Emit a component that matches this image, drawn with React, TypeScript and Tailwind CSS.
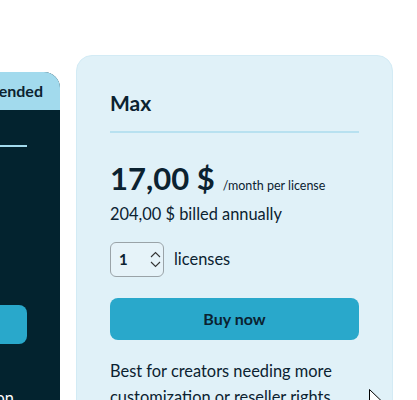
import React from "react";

export default function App() {
  return (
    <div className="relative w-[417px] h-[400px] overflow-hidden bg-white" style={{ fontFamily: "Lato, 'Noto Sans', sans-serif" }}>
      <div className="flex items-start gap-4 pt-[55px] ml-[-257px]">
        {/* Recommended card (mostly off-screen) */}
        <div className="w-[317px] shrink-0 mt-[17px] rounded-t-2xl overflow-hidden bg-[#03232f] h-[400px]">
          <div className="h-[38px] bg-[#a2daed] flex items-center justify-end pr-[17px] text-[16px] font-bold text-[#0c2330]">
            Recommended
          </div>
          <div className="px-[33px]">
            <div className="pt-[35px] h-[37px]">
              <div className="h-[2px] bg-[#a2daed]" />
            </div>
            <div className="h-[158px]" />
            <div className="h-[39px] rounded-lg bg-[#29a8cb]" />
            <div className="mt-[42px] flex justify-end pr-[13px] text-[16.4px] text-white whitespace-nowrap">
              <span>For teams that need collaboration</span>
            </div>
          </div>
        </div>

        {/* Max card */}
        <div className="w-[317px] shrink-0 rounded-2xl bg-[#e0f1f8] border border-[#d3ebf5] h-[400px] px-[33px] pt-[33px] text-[#0b2230]">
          <div className="text-[21px] font-bold leading-[28px]">Max</div>
          <div className="mt-[14px] h-[2px] bg-[#b8e1f0]" />
          <div className="mt-[27px] flex items-baseline gap-[8px]">
            <span className="text-[31px] font-bold leading-[36px]">17,00 $</span>
            <span className="text-[12.5px]">/month per license</span>
          </div>
          <div className="mt-[7px] text-[16.4px] leading-[22px]">204,00 $ billed annually</div>
          <div className="mt-[17px] flex items-center gap-[10px]">
            <div className="w-[54px] h-[35px] rounded-md border border-[#9aa3a8] bg-[#e6f3f9] flex items-center pl-[8px] pr-[2px]">
              <span className="text-[15px] font-bold flex-1">1</span>
              <div className="flex flex-col items-center gap-[3px]">
                <svg width="11" height="7" viewBox="0 0 11 7"><path d="M1 6 L5.5 1.5 L10 6" fill="none" stroke="#333" strokeWidth="1.1" /></svg>
                <svg width="11" height="7" viewBox="0 0 11 7"><path d="M1 1 L5.5 5.5 L10 1" fill="none" stroke="#333" strokeWidth="1.1" /></svg>
              </div>
            </div>
            <span className="text-[16.4px]">licenses</span>
          </div>
          <button className="mt-[21px] w-full h-[42px] rounded-lg bg-[#29a8cb] text-[16px] font-bold text-[#0b2230]">
            Buy now
          </button>
          <div className="mt-[18px] text-[16.4px] leading-[26px]">
            Best for creators needing more customization or reseller rights.
          </div>
        </div>
      </div>

      {/* mouse cursor */}
      <svg className="absolute left-[369px] top-[389px]" width="14" height="22" viewBox="0 0 14 22">
        <path d="M0.5 0.5 L0.5 17 L4.5 13 L7.5 20 L10 19 L7 12 L12.5 12 Z" fill="white" stroke="black" strokeWidth="1" />
      </svg>
    </div>
  );
}
